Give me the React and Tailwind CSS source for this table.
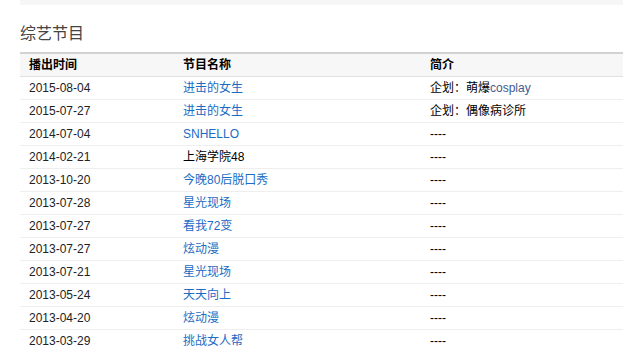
const rows = [
  { date: '2015-08-04', name: '进击的女生', link: true, intro: ['企划：萌爆', 'cosplay'] },
  { date: '2015-07-27', name: '进击的女生', link: true, intro: ['企划：偶像病诊所'] },
  { date: '2014-07-04', name: 'SNHELLO', link: true, intro: ['----'] },
  { date: '2014-02-21', name: '上海学院48', link: false, intro: ['----'] },
  { date: '2013-10-20', name: '今晚80后脱口秀', link: true, intro: ['----'] },
  { date: '2013-07-28', name: '星光现场', link: true, intro: ['----'] },
  { date: '2013-07-27', name: '看我72变', link: true, intro: ['----'] },
  { date: '2013-07-27', name: '炫动漫', link: true, intro: ['----'] },
  { date: '2013-07-21', name: '星光现场', link: true, intro: ['----'] },
  { date: '2013-05-24', name: '天天向上', link: true, intro: ['----'] },
  { date: '2013-04-20', name: '炫动漫', link: true, intro: ['----'] },
  { date: '2013-03-29', name: '挑战女人帮', link: true, intro: ['----'] },
];

export default function App() {
  return (
    <div className="w-[623px] h-[349px] overflow-hidden bg-white pl-5 text-[12px] text-[#222] font-['Liberation_Sans','Noto_Sans_CJK_SC',sans-serif]">
      <div className="h-[5px] bg-[#f6f6f6]" />

      <h2 className="mt-[19px] h-[28px] text-[16px] leading-[20px] text-[#444] font-normal">综艺节目</h2>

      <div className="w-[640px]">
        <div className="flex h-[25px] items-center border-t-2 border-b border-t-[#d2d2d2] border-b-[#e0e0e0] bg-[#f7f7f7] font-bold text-black">
          <div className="w-[154px] pl-[9px]">播出时间</div>
          <div className="w-[246px] pl-[9px]">节目名称</div>
          <div className="flex-1 pl-[10px]">简介</div>
        </div>
        {rows.map((r, i) => (
          <div key={i} className="flex h-[23px] items-center border-b border-[#eeeeee]">
            <div className="w-[154px] pl-[9px] text-[#222]">{r.date}</div>
            <div className={`w-[246px] pl-[9px] ${r.link ? 'text-[#1c6bc4]' : 'text-black'}`}>{r.name}</div>
            <div className="flex-1 pl-[10px] text-black">
              {r.intro[0]}
              {r.intro[1] && <span className="text-[#3f5a8e]">{r.intro[1]}</span>}
            </div>
          </div>
        ))}
      </div>
    </div>
  );
}
